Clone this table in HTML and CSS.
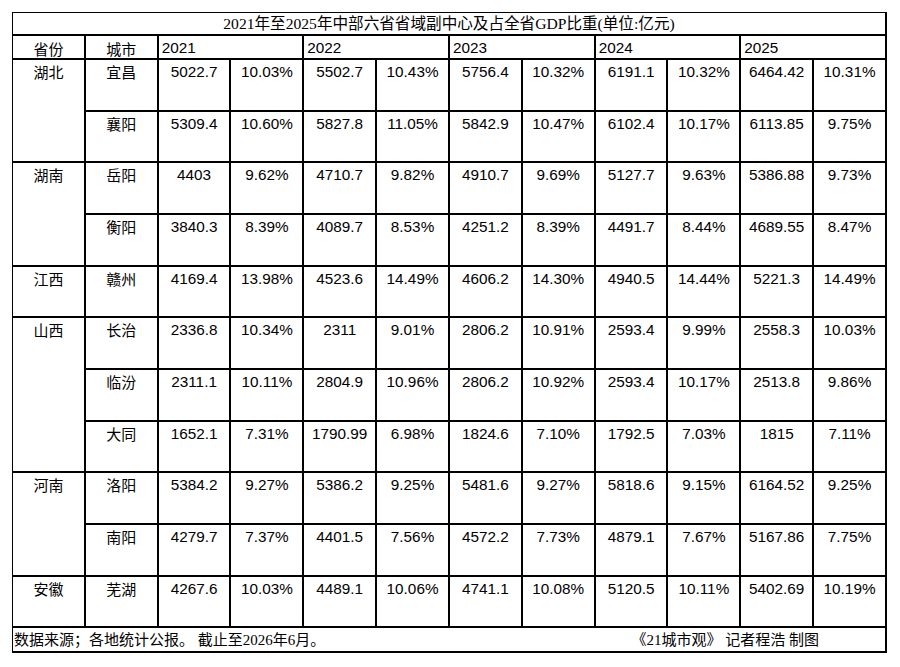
FILE: index.html
```html
<!DOCTYPE html>
<html lang="zh-CN">
<head>
<meta charset="utf-8">
<title>中部六省省域副中心GDP</title>
<link rel="stylesheet" href="styles.css">
</head>
<body>
<div class="page">
<table class="gdp">
  <colgroup>
    <col><col><col><col><col><col><col><col><col><col><col><col>
  </colgroup>
  <tr class="title-row">
    <td colspan="12" class="title">2021年至2025年中部六省省域副中心及占全省GDP比重(单位:亿元)</td>
  </tr>
  <tr class="head-row">
    <td class="zh">省份</td>
    <td class="zh">城市</td>
    <td colspan="2" class="year">2021</td>
    <td colspan="2" class="year">2022</td>
    <td colspan="2" class="year">2023</td>
    <td colspan="2" class="year">2024</td>
    <td colspan="2" class="year">2025</td>
  </tr>
  <tr class="row">
    <td rowspan="2" class="zh">湖北</td><td class="zh">宜昌</td>
    <td>5022.7</td><td>10.03%</td><td>5502.7</td><td>10.43%</td><td>5756.4</td><td>10.32%</td><td>6191.1</td><td>10.32%</td><td>6464.42</td><td>10.31%</td>
  </tr>
  <tr class="row">
    <td class="zh">襄阳</td>
    <td>5309.4</td><td>10.60%</td><td>5827.8</td><td>11.05%</td><td>5842.9</td><td>10.47%</td><td>6102.4</td><td>10.17%</td><td>6113.85</td><td>9.75%</td>
  </tr>
  <tr class="row">
    <td rowspan="2" class="zh">湖南</td><td class="zh">岳阳</td>
    <td>4403</td><td>9.62%</td><td>4710.7</td><td>9.82%</td><td>4910.7</td><td>9.69%</td><td>5127.7</td><td>9.63%</td><td>5386.88</td><td>9.73%</td>
  </tr>
  <tr class="row">
    <td class="zh">衡阳</td>
    <td>3840.3</td><td>8.39%</td><td>4089.7</td><td>8.53%</td><td>4251.2</td><td>8.39%</td><td>4491.7</td><td>8.44%</td><td>4689.55</td><td>8.47%</td>
  </tr>
  <tr class="row">
    <td class="zh">江西</td><td class="zh">赣州</td>
    <td>4169.4</td><td>13.98%</td><td>4523.6</td><td>14.49%</td><td>4606.2</td><td>14.30%</td><td>4940.5</td><td>14.44%</td><td>5221.3</td><td>14.49%</td>
  </tr>
  <tr class="row">
    <td rowspan="3" class="zh">山西</td><td class="zh">长治</td>
    <td>2336.8</td><td>10.34%</td><td>2311</td><td>9.01%</td><td>2806.2</td><td>10.91%</td><td>2593.4</td><td>9.99%</td><td>2558.3</td><td>10.03%</td>
  </tr>
  <tr class="row">
    <td class="zh">临汾</td>
    <td>2311.1</td><td>10.11%</td><td>2804.9</td><td>10.96%</td><td>2806.2</td><td>10.92%</td><td>2593.4</td><td>10.17%</td><td>2513.8</td><td>9.86%</td>
  </tr>
  <tr class="row">
    <td class="zh">大同</td>
    <td>1652.1</td><td>7.31%</td><td>1790.99</td><td>6.98%</td><td>1824.6</td><td>7.10%</td><td>1792.5</td><td>7.03%</td><td>1815</td><td>7.11%</td>
  </tr>
  <tr class="row">
    <td rowspan="2" class="zh">河南</td><td class="zh">洛阳</td>
    <td>5384.2</td><td>9.27%</td><td>5386.2</td><td>9.25%</td><td>5481.6</td><td>9.27%</td><td>5818.6</td><td>9.15%</td><td>6164.52</td><td>9.25%</td>
  </tr>
  <tr class="row">
    <td class="zh">南阳</td>
    <td>4279.7</td><td>7.37%</td><td>4401.5</td><td>7.56%</td><td>4572.2</td><td>7.73%</td><td>4879.1</td><td>7.67%</td><td>5167.86</td><td>7.75%</td>
  </tr>
  <tr class="row">
    <td class="zh">安徽</td><td class="zh">芜湖</td>
    <td>4267.6</td><td>10.03%</td><td>4489.1</td><td>10.06%</td><td>4741.1</td><td>10.08%</td><td>5120.5</td><td>10.11%</td><td>5402.69</td><td>10.19%</td>
  </tr>
  <tr class="foot-row">
    <td colspan="12" class="foot">
      <div class="foot-inner">
        <span>数据来源；各地统计公报。 截止至2026年6月。</span>
        <span>《21城市观》 记者程浩 制图</span>
      </div>
    </td>
  </tr>
</table>
</div>
</body>
</html>
```

FILE: styles.css
```css
html, body {
  margin: 0;
  padding: 0;
  background: #ffffff;
}

.page {
  padding: 12px 0 0 12px;
}

.gdp {
  width: 875px;
  table-layout: fixed;
  border-collapse: separate;
  border-spacing: 0;
  border-top: 1px solid #000;
  border-left: 1px solid #000;
  color: #000;
  font-family: "Liberation Sans", "Noto Sans CJK SC", sans-serif;
  font-size: 15.3px;
  line-height: 18px;
}

.gdp td {
  border-right: 2px solid #000;
  border-bottom: 2px solid #000;
  padding: 3px 0 0 0;
  text-align: center;
  vertical-align: top;
  white-space: nowrap;
  overflow: hidden;
}

.title-row {
  height: 23px;
}

.gdp td.title {
  font-family: "Liberation Serif", "Noto Sans CJK SC", serif;
  font-size: 15.6px;
  line-height: 20px;
  padding: 0;
  vertical-align: middle;
}

.head-row {
  height: 24px;
}

.head-row td {
  padding-top: 4px;
}

.gdp td.year {
  text-align: left;
  padding-left: 3px;
  padding-top: 3px;
}

.row {
  height: 51.67px;
}

.gdp td.zh {
  font-family: "Noto Sans CJK SC", sans-serif;
  font-size: 15px;
}

.foot-row {
  height: 24.6px;
}

.gdp td.foot {
  padding: 0 66px 0 1px;
  vertical-align: middle;
  font-family: "Liberation Serif", "Noto Sans CJK SC", serif;
  font-size: 15px;
  line-height: 20px;
}

.foot-inner {
  display: flex;
  justify-content: space-between;
}
```
